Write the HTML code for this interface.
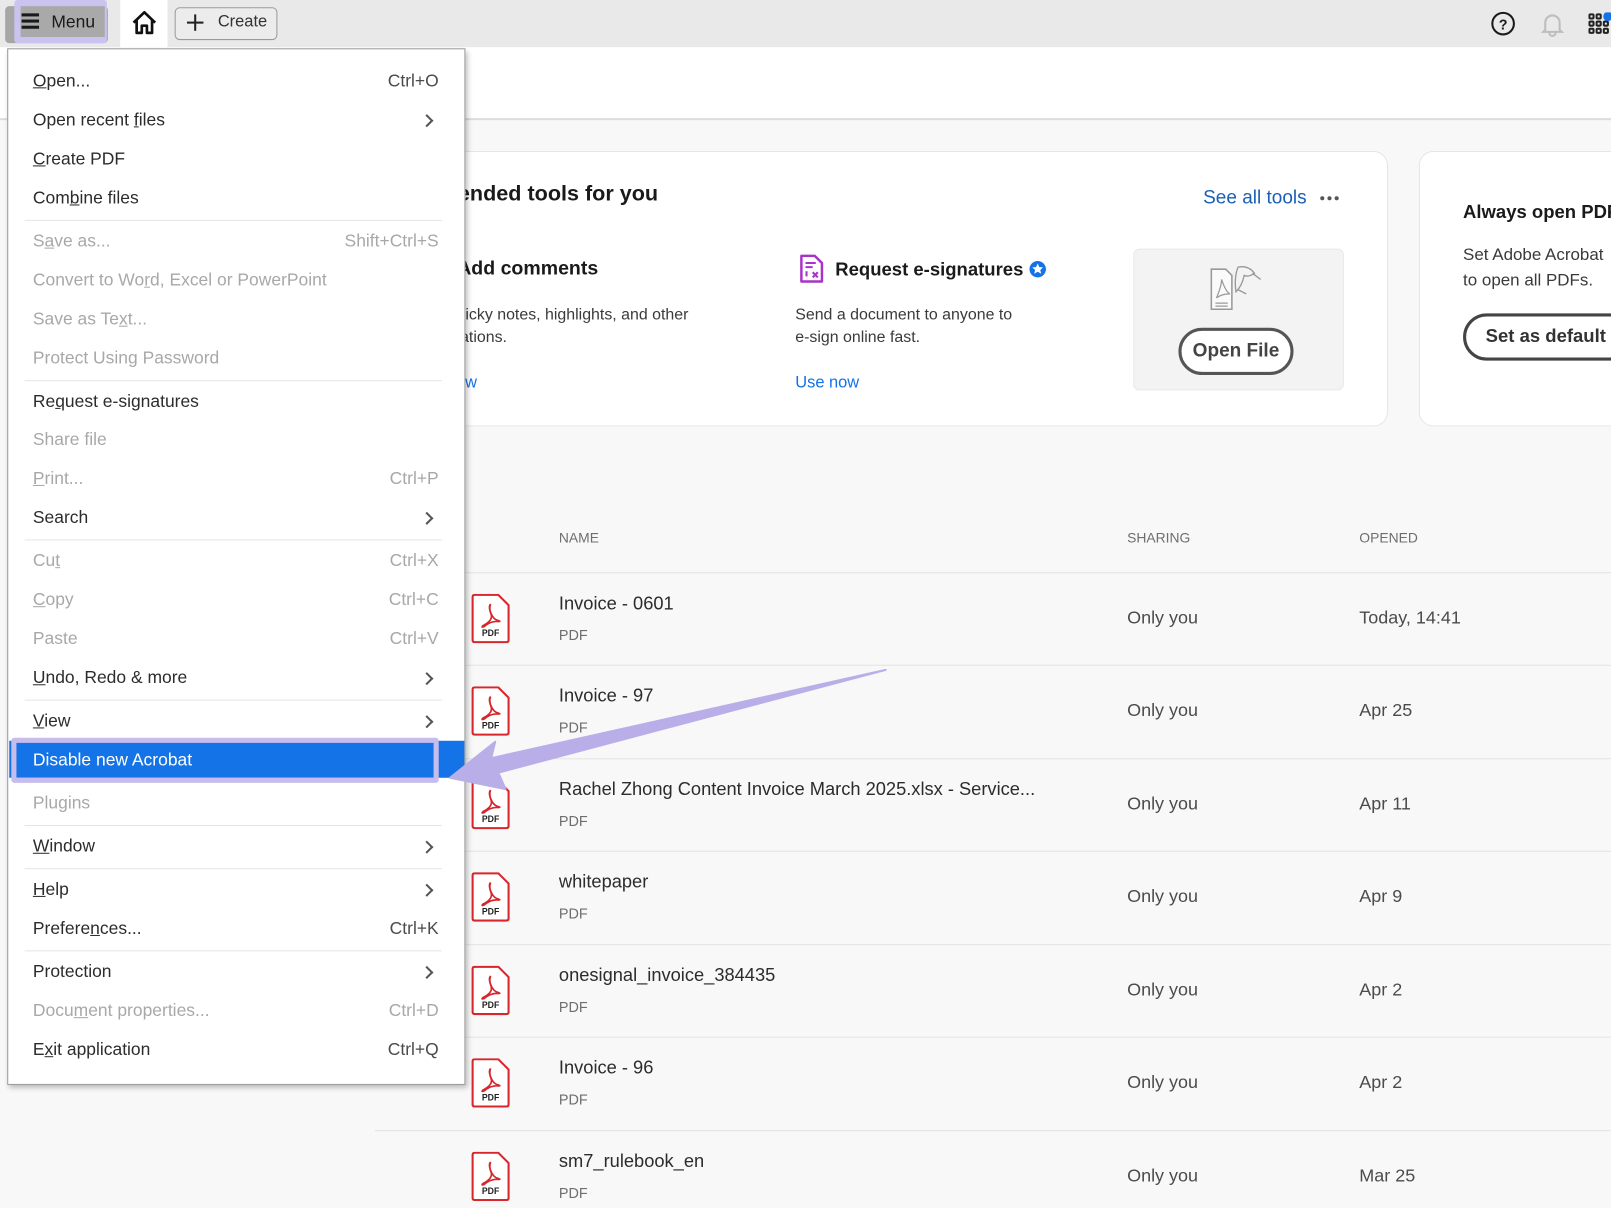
<!DOCTYPE html>
<html><head><meta charset="utf-8"><style>
html,body{margin:0;padding:0;width:1611px;height:1208px;overflow:hidden;background:#f8f8f9;}
#w{position:absolute;left:0;top:0;width:1568px;height:1176px;transform:scale(1.02742);transform-origin:0 0;font-family:"Liberation Sans",sans-serif;color:#2c2c2c;}
.a{position:absolute;white-space:nowrap;}
.mi{position:absolute;left:32px;font-size:17px;line-height:20px;color:#2c2c2c;}
.sc{position:absolute;right:33px;font-size:17px;line-height:20px;color:#4b4b4b;}
.dis{color:#a8a8a8 !important;}
.sep{position:absolute;left:24px;width:406px;height:1px;background:#e6e6e6;}
.chev{position:absolute;left:411px;width:7px;height:7px;border-right:2px solid #555;border-top:2px solid #555;transform:rotate(45deg);}
.fn{font-size:17.8px;color:#2c2c2c;}
.ft{font-size:14px;color:#6e6e6e;}
.sh{font-size:17.5px;color:#4b4b4b;}
.rl{position:absolute;left:365px;right:0;height:1px;background:#e3e3e3;}
</style></head><body><div id="w">
<div class="a" style="left:0;top:0;width:1568px;height:46px;background:#e9e9e9;"></div>
<div class="a" style="left:5px;top:6px;width:100px;height:36px;background:#a6a6a6;border-radius:4px;"></div>
<div class="a" style="left:14px;top:0;width:90px;height:42px;background:#cbc3ef;border-radius:3px;"></div>
<div class="a" style="left:20px;top:6px;width:82px;height:30px;background:#a9a9a9;"></div>
<div class="a" style="left:21px;top:13px;width:17px;height:3px;background:#1a1a1a;box-shadow:0 6px 0 #1a1a1a,0 12px 0 #1a1a1a;"></div>
<div class="a" style="left:50px;top:12px;font-size:17px;color:#1a1a1a;">Menu</div>
<div class="a" style="left:117px;top:0;width:46px;height:46px;background:#fff;"></div>
<svg class="a" style="left:127px;top:9px" width="27" height="26" viewBox="0 0 27 26"><path d="M3 13 L13.5 3 L24 13 M6 11 V23 H11 V16 H16 V23 H21 V11" fill="none" stroke="#111" stroke-width="2.6" stroke-linejoin="round"/></svg>
<div class="a" style="left:170px;top:7px;width:98px;height:30px;border:1.5px solid #9a9a9a;border-radius:5px;background:#ececec;"></div>
<div class="a" style="left:182px;top:21px;width:16px;height:2px;background:#222;"></div>
<div class="a" style="left:189px;top:14px;width:2px;height:16px;background:#222;"></div>
<div class="a" style="left:212px;top:13px;font-size:16px;color:#333;">Create</div>
<svg class="a" style="left:1451px;top:11px" width="24" height="24"><circle cx="12" cy="12" r="10.5" fill="none" stroke="#1a1a1a" stroke-width="2"/><text x="12" y="17.5" font-size="14" font-weight="bold" text-anchor="middle" font-family="Liberation Sans" fill="#1a1a1a">?</text></svg>
<svg class="a" style="left:1498px;top:10px" width="26" height="26"><path d="M6 19 V12 A7 7 0 0 1 20 12 V19 L22 21 H4 Z M10 22 A3 3 0 0 0 16 22" fill="none" stroke="#bdbdbd" stroke-width="2"/></svg>
<svg class="a" style="left:1546px;top:12px" width="22" height="22"><g fill="none" stroke="#222" stroke-width="2"><rect x="1" y="2" width="4" height="4" rx="1"/><rect x="8" y="2" width="4" height="4" rx="1"/><rect x="1" y="9" width="4" height="4" rx="1"/><rect x="8" y="9" width="4" height="4" rx="1"/><rect x="15" y="9" width="4" height="4" rx="1"/><rect x="1" y="16" width="4" height="4" rx="1"/><rect x="8" y="16" width="4" height="4" rx="1"/><rect x="15" y="16" width="4" height="4" rx="1"/></g><circle cx="19" cy="4" r="4.5" fill="#1473e6"/></svg>
<div class="a" style="left:0;top:46px;width:1568px;height:69px;background:#fff;border-bottom:2px solid #dcdcdc;"></div>
<div class="a" style="left:380px;top:147px;width:969px;height:266px;background:#fff;border:1px solid #e6e6e6;border-radius:14px;"></div>
<div class="a" style="left:1381px;top:147px;width:220px;height:266px;background:#fff;border:1px solid #e6e6e6;border-radius:14px;"></div>
<div class="a" style="left:357px;top:177px;font-size:21px;font-weight:bold;color:#1a1a1a;">Recommended tools for you</div>
<div class="a" style="left:1171px;top:181px;font-size:18.5px;color:#1a5fb4;">See all tools</div>
<div class="a" style="left:1285px;top:191px;width:4px;height:4px;border-radius:2px;background:#555;box-shadow:7px 0 0 #555,14px 0 0 #555;"></div>
<div class="a" style="left:445px;top:251px;font-size:19px;font-weight:bold;color:#1a1a1a;">Add comments</div>
<div class="a" style="left:409px;top:296px;font-size:15.5px;line-height:22px;color:#3a3a3a;">Add sticky notes, highlights, and other<br>annotations.</div>
<div class="a" style="left:402px;top:364px;font-size:16px;color:#1473e6;">Use now</div>
<svg class="a" style="left:777px;top:247px" width="26" height="30"><path d="M3 2 H16 L23 9 V27 H3 Z" fill="none" stroke="#a932c8" stroke-width="2.4" stroke-linejoin="round"/><path d="M7 9 H17 M7 13 H14" stroke="#a932c8" stroke-width="2"/><path d="M8 17 V22 M14 18 L19 23 M19 18 L14 23" stroke="#a932c8" stroke-width="2"/></svg>
<div class="a" style="left:813px;top:252px;font-size:18px;font-weight:bold;color:#1a1a1a;">Request e-signatures</div>
<svg class="a" style="left:1001px;top:253px" width="18" height="18"><circle cx="9" cy="9" r="8" fill="#1473e6"/><path d="M9 3.5 L10.6 7 L14.3 7.3 L11.5 9.8 L12.4 13.5 L9 11.5 L5.6 13.5 L6.5 9.8 L3.7 7.3 L7.4 7 Z" fill="#fff"/></svg>
<div class="a" style="left:774px;top:296px;font-size:15.5px;line-height:22px;color:#3a3a3a;">Send a document to anyone to<br>e-sign online fast.</div>
<div class="a" style="left:774px;top:364px;font-size:16px;color:#1473e6;">Use now</div>
<div class="a" style="left:1103px;top:242px;width:203px;height:136px;background:#f3f3f3;border:1px solid #e8e8e8;border-radius:6px;"></div>
<svg class="a" style="left:1175px;top:256px" width="60" height="52"><path d="M4 6 H18 L24 12 V45 H4 Z" fill="#fafafa" stroke="#999" stroke-width="1.5"/><path d="M9 34 Q14 22 14 16 Q18 28 22 30 Q14 30 9 34" fill="none" stroke="#999" stroke-width="1.2"/><path d="M8 39 H20 M8 42 H20" stroke="#999" stroke-width="1.2"/><path d="M30 4 Q40 2 46 10 Q40 14 36 12 Q34 22 28 28 Q26 14 30 4 Z" fill="none" stroke="#999" stroke-width="1.3"/><path d="M44 10 L52 16 M30 26 L38 30" stroke="#999" stroke-width="1.3"/></svg>
<div class="a" style="left:1147px;top:319px;width:106px;height:40px;border:3px solid #555;border-radius:24px;background:#fff;"></div>
<div class="a" style="left:1147px;top:330px;width:112px;text-align:center;font-size:18.5px;font-weight:bold;color:#444;">Open File</div>
<div class="a" style="left:1424px;top:196px;font-size:18px;font-weight:bold;color:#1a1a1a;">Always open PDFs</div>
<div class="a" style="left:1424px;top:236px;font-size:16.5px;line-height:25px;color:#3a3a3a;">Set Adobe Acrobat<br>to open all PDFs.</div>
<div class="a" style="left:1424px;top:305px;width:160px;height:40px;border:3px solid #444;border-radius:24px;background:#fff;"></div>
<div class="a" style="left:1446px;top:317px;font-size:18px;font-weight:bold;color:#333;">Set as default</div>
<div class="a" style="left:544px;top:516px;font-size:13.5px;color:#6e6e6e;">NAME</div>
<div class="a" style="left:1097px;top:516px;font-size:13.5px;color:#6e6e6e;">SHARING</div>
<div class="a" style="left:1323px;top:516px;font-size:13.5px;color:#6e6e6e;">OPENED</div>
<div class="rl" style="top:557px"></div>
<div class="rl" style="top:647px"></div>
<div class="rl" style="top:738px"></div>
<div class="rl" style="top:828px"></div>
<div class="rl" style="top:919px"></div>
<div class="rl" style="top:1009px"></div>
<div class="rl" style="top:1100px"></div>
<svg width="0" height="0" style="position:absolute"><defs><g id="pdf"><path d="M2 3 Q2 1 4 1 H27 L37 11 V45 Q37 47 35 47 H4 Q2 47 2 45 Z" fill="#fff" stroke="#d7262c" stroke-width="2"/><path d="M19.5 10 Q17 12 20 20 Q22 26 12 31 Q10 33 13 32 Q20 26 27 27 Q30 27 27 26 Q22 25 19.5 18 Q18 14 19.5 10" fill="none" stroke="#d7262c" stroke-width="1.6"/><text x="19.5" y="41" font-size="8.5" font-weight="bold" text-anchor="middle" font-family="Liberation Sans" fill="#222">PDF</text></g></defs></svg>
<div class="a" style="left:458px;top:578px"><svg width="40" height="49"><use href="#pdf"/></svg></div>
<div class="a fn" style="left:544px;top:577px">Invoice - 0601</div><div class="a ft" style="left:544px;top:610px">PDF</div>
<div class="a sh" style="left:1097px;top:591px">Only you</div><div class="a sh" style="left:1323px;top:591px">Today, 14:41</div>
<div class="a" style="left:458px;top:668px"><svg width="40" height="49"><use href="#pdf"/></svg></div>
<div class="a fn" style="left:544px;top:667px">Invoice - 97</div><div class="a ft" style="left:544px;top:700px">PDF</div>
<div class="a sh" style="left:1097px;top:681px">Only you</div><div class="a sh" style="left:1323px;top:681px">Apr 25</div>
<div class="a" style="left:458px;top:759px"><svg width="40" height="49"><use href="#pdf"/></svg></div>
<div class="a fn" style="left:544px;top:758px">Rachel Zhong Content Invoice March 2025.xlsx - Service...</div><div class="a ft" style="left:544px;top:791px">PDF</div>
<div class="a sh" style="left:1097px;top:772px">Only you</div><div class="a sh" style="left:1323px;top:772px">Apr 11</div>
<div class="a" style="left:458px;top:849px"><svg width="40" height="49"><use href="#pdf"/></svg></div>
<div class="a fn" style="left:544px;top:848px">whitepaper</div><div class="a ft" style="left:544px;top:881px">PDF</div>
<div class="a sh" style="left:1097px;top:862px">Only you</div><div class="a sh" style="left:1323px;top:862px">Apr 9</div>
<div class="a" style="left:458px;top:940px"><svg width="40" height="49"><use href="#pdf"/></svg></div>
<div class="a fn" style="left:544px;top:939px">onesignal_invoice_384435</div><div class="a ft" style="left:544px;top:972px">PDF</div>
<div class="a sh" style="left:1097px;top:953px">Only you</div><div class="a sh" style="left:1323px;top:953px">Apr 2</div>
<div class="a" style="left:458px;top:1030px"><svg width="40" height="49"><use href="#pdf"/></svg></div>
<div class="a fn" style="left:544px;top:1029px">Invoice - 96</div><div class="a ft" style="left:544px;top:1062px">PDF</div>
<div class="a sh" style="left:1097px;top:1043px">Only you</div><div class="a sh" style="left:1323px;top:1043px">Apr 2</div>
<div class="a" style="left:458px;top:1121px"><svg width="40" height="49"><use href="#pdf"/></svg></div>
<div class="a fn" style="left:544px;top:1120px">sm7_rulebook_en</div><div class="a ft" style="left:544px;top:1153px">PDF</div>
<div class="a sh" style="left:1097px;top:1134px">Only you</div><div class="a sh" style="left:1323px;top:1134px">Mar 25</div>
<div class="a" style="left:7px;top:47px;width:444px;height:1007px;background:#fff;border:1px solid #9a9a9a;box-shadow:2px 3px 5px rgba(0,0,0,0.25);overflow:hidden;">
<div style="position:relative;left:-8px;top:-48px;width:460px;height:1060px;">
<div class="mi" style="top:69px"><u>O</u>pen...</div><div class="sc" style="top:69px">Ctrl+O</div>
<div class="mi" style="top:107px">Open recent <u>f</u>iles</div><div class="chev" style="top:113px"></div>
<div class="mi" style="top:145px"><u>C</u>reate PDF</div>
<div class="mi" style="top:183px">Com<u>b</u>ine files</div>
<div class="sep" style="top:214px"></div>
<div class="mi dis" style="top:225px">S<u>a</u>ve as...</div><div class="sc dis" style="top:225px">Shift+Ctrl+S</div>
<div class="mi dis" style="top:263px">Convert to Wo<u>r</u>d, Excel or PowerPoint</div>
<div class="mi dis" style="top:301px">Save as Te<u>x</u>t...</div>
<div class="mi dis" style="top:339px">Protect Using Password</div>
<div class="sep" style="top:370px"></div>
<div class="mi" style="top:381px">Re<u>q</u>uest e-signatures</div>
<div class="mi dis" style="top:418px">Share file</div>
<div class="mi dis" style="top:456px"><u>P</u>rint...</div><div class="sc dis" style="top:456px">Ctrl+P</div>
<div class="mi" style="top:494px">Search</div><div class="chev" style="top:500px"></div>
<div class="sep" style="top:525px"></div>
<div class="mi dis" style="top:536px">Cu<u>t</u></div><div class="sc dis" style="top:536px">Ctrl+X</div>
<div class="mi dis" style="top:574px"><u>C</u>opy</div><div class="sc dis" style="top:574px">Ctrl+C</div>
<div class="mi dis" style="top:612px">Paste</div><div class="sc dis" style="top:612px">Ctrl+V</div>
<div class="mi" style="top:650px"><u>U</u>ndo, Redo &amp; more</div><div class="chev" style="top:656px"></div>
<div class="sep" style="top:681px"></div>
<div class="mi" style="top:692px"><u>V</u>iew</div><div class="chev" style="top:698px"></div>
<div style="position:absolute;left:9px;top:721px;width:451px;height:36px;background:#1473e6;"></div>
<div style="position:absolute;left:11px;top:718px;width:406px;height:34px;border:5px solid #c7bded;border-radius:3px;"></div>
<div class="mi" style="top:730px;color:#fff;">Disable new Acrobat</div>
<div class="mi dis" style="top:772px">Plugins</div>
<div class="sep" style="top:803px"></div>
<div class="mi" style="top:814px"><u>W</u>indow</div><div class="chev" style="top:820px"></div>
<div class="sep" style="top:845px"></div>
<div class="mi" style="top:856px"><u>H</u>elp</div><div class="chev" style="top:862px"></div>
<div class="mi" style="top:894px">Prefere<u>n</u>ces...</div><div class="sc" style="top:894px">Ctrl+K</div>
<div class="sep" style="top:925px"></div>
<div class="mi" style="top:936px">Protection</div><div class="chev" style="top:942px"></div>
<div class="mi dis" style="top:974px">Docu<u>m</u>ent properties...</div><div class="sc dis" style="top:974px">Ctrl+D</div>
<div class="mi" style="top:1012px">E<u>x</u>it application</div><div class="sc" style="top:1012px">Ctrl+Q</div>
</div></div>
<svg class="a" style="left:0;top:0" width="1568" height="1176"><path d="M862 652 L478 738 L482 722 L438 757 L492 768 L485 752 Z" fill="#b9aee8" stroke="#b9aee8" stroke-width="2" stroke-linejoin="round"/></svg>
</div></body></html>
